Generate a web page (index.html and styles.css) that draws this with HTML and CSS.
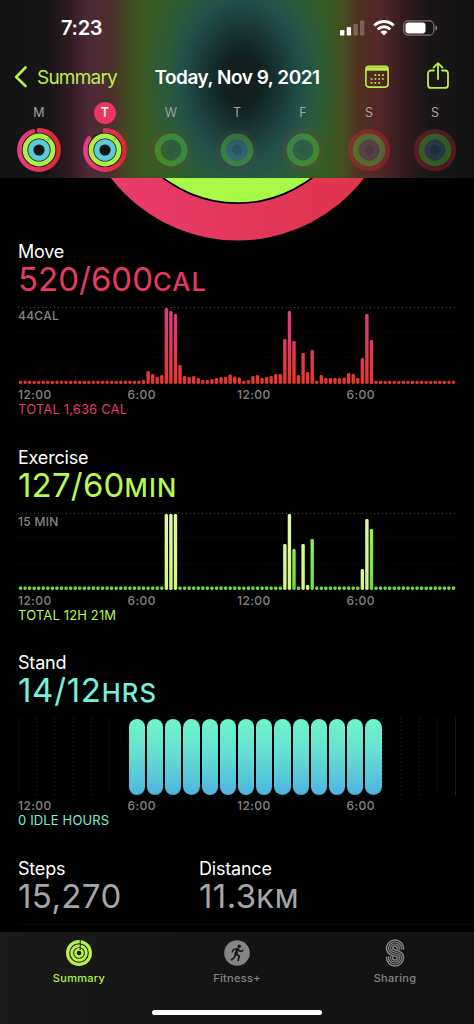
FILE: index.html
```html
<!DOCTYPE html>
<html lang="en">
<head>
<meta charset="UTF-8">
<meta name="viewport" content="width=device-width, initial-scale=1.0">
<title>Activity Summary</title>
<link rel="stylesheet" href="styles.css">
</head>
<body>
  <header class="top">
    <div class="status">
      <div class="time">7:23</div>
      <div class="status-icons">
        <svg class="signal" width="25" height="16" viewBox="0 0 25 16" fill="#fff">
          <rect x="0" y="10" width="4.4" height="5.5" rx="1.2"/>
          <rect x="6.7" y="7" width="4.4" height="8.5" rx="1.2"/>
          <rect x="13.4" y="4" width="4.4" height="11.5" rx="1.2" opacity=".25"/>
          <rect x="20" y="0.5" width="4.4" height="15" rx="1.2" opacity=".25"/>
        </svg>
        <svg class="wifi" width="22" height="16" viewBox="0 0 22 16" fill="none" stroke="#fff" stroke-width="2.9">
          <path d="M1.3 5.6a13.7 13.7 0 0 1 19.4 0"/>
          <path d="M4.7 9.4a8.9 8.9 0 0 1 12.6 0"/>
          <path d="M7.4 12a5.1 5.1 0 0 1 7.2 0L11 15.6z" fill="#fff" stroke="none"/>
        </svg>
        <svg class="battery" width="35" height="16" viewBox="0 0 35 16">
          <rect x=".8" y=".8" width="30" height="14.4" rx="4.5" fill="none" stroke="#fff" stroke-opacity=".4" stroke-width="1.2"/>
          <rect x="2.5" y="2.6" width="20" height="10.8" rx="2.8" fill="#fff"/>
          <path d="M32.4 5.3c2.4.7 2.4 4.7 0 5.4z" fill="#fff" fill-opacity=".45"/>
        </svg>
      </div>
    </div>

    <nav class="nav">
      <div class="back">
        <svg width="14" height="22" viewBox="0 0 14 22" fill="none" stroke="#b8f048" stroke-width="2.6" stroke-linecap="round" stroke-linejoin="round"><path d="M11.500 1.500 2.200 11l9.300 9"/></svg>
        <span class="back-text">Summary</span>
      </div>
      <div class="title">Today, Nov 9, 2021</div>
      <div class="actions">
        <svg width="24" height="24" viewBox="0 0 24 24" fill="none" stroke="#b8f048" stroke-width="1.6">
          <rect x=".9" y="2.2" width="22.2" height="20.9" rx="3"/>
          <path d="M1.200 3.200h21.600v3.500H1.200z" fill="#b8f048" stroke="none"/>
          <path d="M9.500 11.100h10M5.700 15h13.500M5.700 18.900h9.500" stroke-width="1.7" stroke-dasharray="1.7 2.1"/>
        </svg>
        <svg width="22" height="28" viewBox="0 0 22 28" fill="none" stroke="#b8f048" stroke-width="1.8" stroke-linecap="round" stroke-linejoin="round">
          <path d="M7 8.500H4a3 3 0 0 0-3 3v11.400a3 3 0 0 0 3 3h14a3 3 0 0 0 3-3V11.500a3 3 0 0 0-3-3h-3"/>
          <path d="M11 17V1.500M6.500 5.600 11 1.100l4.500 4.500"/>
        </svg>
      </div>
    </nav>

    <div class="week" id="week"></div>
  </header>

  <main>
    <svg class="hero" width="474" height="63" viewBox="0 0 474 63">
      <defs>
        <linearGradient id="heroMove" x1="0" x2="1"><stop offset="0" stop-color="#e93c70"/><stop offset="1" stop-color="#df3349"/></linearGradient>
      </defs>
      <circle cx="237.5" cy="-97" r="159.5" fill="url(#heroMove)"/>
      <circle cx="237.5" cy="-97" r="123" fill="#000"/>
      <circle cx="237.5" cy="-97" r="121.3" fill="#a8fa48"/>
    </svg>

    <section class="metric move">
      <h2>Move</h2>
      <div class="value">520/600<small>CAL</small></div>
      <div class="chart">
        <span class="max">44CAL</span>
        <svg id="moveChart" width="438" height="77">
          <defs>
            <linearGradient id="moveFill" gradientUnits="userSpaceOnUse" x1="0" y1="0" x2="0" y2="77"><stop offset="0" stop-color="#e03c88"/><stop offset="1" stop-color="#e6372a"/></linearGradient>
          </defs>
        </svg>
      </div>
      <div class="hours"><span>12:00</span><span>6:00</span><span>12:00</span><span>6:00</span></div>
      <div class="total">TOTAL 1,636 CAL</div>
    </section>

    <section class="metric exercise">
      <h2>Exercise</h2>
      <div class="value">127/60<small>MIN</small></div>
      <div class="chart">
        <span class="max">15 MIN</span>
        <svg id="exerciseChart" width="438" height="77">
          <defs>
            <linearGradient id="exerciseFill" gradientUnits="userSpaceOnUse" x1="0" y1="0" x2="0" y2="77"><stop offset="0" stop-color="#a8f050"/><stop offset="1" stop-color="#6fdc48"/></linearGradient>
            <linearGradient id="lightFill" gradientUnits="userSpaceOnUse" x1="0" y1="0" x2="0" y2="77"><stop offset="0" stop-color="#e2faa9"/><stop offset="1" stop-color="#d4f77f"/></linearGradient>
          </defs>
        </svg>
      </div>
      <div class="hours"><span>12:00</span><span>6:00</span><span>12:00</span><span>6:00</span></div>
      <div class="total">TOTAL 12H 21M</div>
    </section>

    <section class="metric stand">
      <h2>Stand</h2>
      <div class="value">14/12<small>HRS</small></div>
      <div class="stand-chart" id="standChart"></div>
      <div class="hours"><span>12:00</span><span>6:00</span><span>12:00</span><span>6:00</span></div>
      <div class="total">0 IDLE HOURS</div>
    </section>

    <section class="totals">
      <div class="steps">
        <h2>Steps</h2>
        <div class="value">15,270</div>
      </div>
      <div class="distance">
        <h2>Distance</h2>
        <div class="value">11.3<small>KM</small></div>
      </div>
    </section>
  </main>

  <footer class="tabs">
    <div class="tab active">
      <svg width="28" height="28" viewBox="0 0 28 28" fill="none" stroke="#b8f048">
        <circle cx="14" cy="14" r="11.4" stroke-width="3.2"/>
        <circle cx="14" cy="14" r="7.3" stroke-width="2.9"/>
        <circle cx="14" cy="14" r="3.6" stroke-width="2.6"/>
        <path d="M15.200 1v10" stroke="#161616" stroke-width="1"/>
      </svg>
      <span>Summary</span>
    </div>
    <div class="tab">
      <svg width="28" height="28" viewBox="0 0 28 28" fill="none" stroke="#161616" stroke-linecap="round" stroke-linejoin="round">
        <circle cx="14" cy="14" r="12.8" fill="#858585" stroke="none"/>
        <circle cx="16.2" cy="7.2" r="1.7" fill="#161616" stroke="none"/>
        <path d="M14.600 10.300 12.800 15" stroke-width="3"/>
        <path d="M14.500 9.800 10.600 10.400 9.200 13M15.500 10.200l1.700 2.300 2.800-1" stroke-width="1.4"/>
        <path d="M13.300 15l3 2.200-1.200 4.200M12.400 15.400l-1 3-2.800 2.400" stroke-width="1.7"/>
      </svg>
      <span>Fitness+</span>
    </div>
    <div class="tab">
      <svg width="28" height="28" viewBox="0 0 28 28" fill="none">
        <defs>
          <path id="sharingS" d="M19.500 10.500V9.500a5.500 5.500 0 0 0-11 0c0 3.200 2.600 3.900 5.500 4.500s5.500 1.500 5.500 4.500a5.500 5.500 0 0 1-11 0v-1"/>
        </defs>
        <use href="#sharingS" stroke="#858585" stroke-width="7.600"/>
        <use href="#sharingS" stroke="#161616" stroke-width="4.600"/>
        <use href="#sharingS" stroke="#858585" stroke-width="3.200"/>
        <use href="#sharingS" stroke="#161616" stroke-width=".9"/>
      </svg>
      <span>Sharing</span>
    </div>
    <div class="home-bar"></div>
  </footer>

  <script src="script.js"></script>
</body>
</html>
```
FILE: styles.css
```css
* {
  box-sizing: border-box;
}

body {
  margin: 0;
  width: 474px;
  height: 1024px;
  display: flex;
  flex-direction: column;
  overflow: hidden;
  background: #000;
  color: #fff;
  font-family: Inter, "Liberation Sans", sans-serif;
}

svg {
  display: block;
  flex: none;
}

h2 {
  margin: 0;
  font-size: 18px;
  line-height: 22px;
  font-weight: 400;
  letter-spacing: -0.2px;
}

/* Header */
.top {
  flex: none;
  height: 178px;
  background:
    radial-gradient(ellipse 100px 135px at 242px 80px, #131b1d 0%, #121f20 18%, #173634 38%, rgba(31, 78, 76, 0.95) 58%, rgba(34, 88, 74, 0.6) 76%, rgba(44, 94, 44, 0) 100%),
    linear-gradient(90deg, #141414 0, #161415 45px, #2c1a20 68px, #4e2838 88px, #4c2f2c 110px, #43491f 126px, #3b5a1e 145px, #2d5f2a 185px, #2d5f30 290px, #365c1f 325px, #44501f 343px, #503021 358px, #552628 378px, #341d1f 402px, #1a1617 428px, #131313 474px);
}

.status {
  height: 55px;
  display: flex;
  justify-content: space-between;
  padding: 0 36px 0 61px;
}

.time {
  margin-top: 16px;
  font-size: 20px;
  line-height: 25px;
  font-weight: 600;
  letter-spacing: -0.3px;
}

.status-icons {
  display: flex;
  align-items: center;
  height: 55px;
}

.wifi {
  margin-left: 8px;
}

.battery {
  margin-left: 8px;
}

.nav {
  height: 44px;
  display: grid;
  grid-template-columns: 137px 200px 137px;
  align-items: center;
}

.back {
  display: flex;
  align-items: center;
  padding-left: 14px;
  color: #b8f048;
  font-size: 19px;
}

.back-text {
  margin-left: 9px;
  letter-spacing: -0.8px;
}

.title {
  text-align: center;
  white-space: nowrap;
  font-size: 19px;
  font-weight: 600;
  letter-spacing: -0.48px;
}

.actions {
  display: flex;
  align-items: center;
  justify-content: space-between;
  padding: 0 25px 2px 28px;
}

.week {
  display: grid;
  grid-template-columns: repeat(7, 66px);
  padding-left: 6px;
}

.day {
  display: flex;
  flex-direction: column;
  align-items: center;
}

.letter {
  width: 22px;
  height: 22px;
  margin: 3px 0 4px;
  border-radius: 50%;
  line-height: 22px;
  text-align: center;
  font-size: 12.5px;
  color: #a0a0a0;
}

.day.today .letter {
  background: #ee3562;
  color: #fff;
  font-weight: 600;
}

.day.future svg {
  opacity: 0.38;
}

/* Metrics */
main {
  flex: 1;
  min-height: 0;
  overflow: hidden;
}

.metric {
  height: 205.7px;
  padding: 0 18px;
}

.value {
  height: 34px;
  line-height: 32px;
  font-size: 33px;
  white-space: nowrap;
}

.value small {
  font-size: 25.5px;
  font-weight: 500;
  letter-spacing: 1.1px;
}

.move .value,
.move .total {
  color: #e73a60;
}

.exercise .value,
.exercise .total {
  color: #b6f94f;
}

.stand .value,
.stand .total {
  color: #70f2dd;
}

.exercise .value {
  letter-spacing: 0.2px;
}

.stand .value {
  letter-spacing: 0.7px;
}

.chart {
  position: relative;
  height: 77px;
  margin-top: 10px;
  background:
    repeating-linear-gradient(90deg, #474747 0 1px, transparent 1px 4px) 0 0 / 100% 1px no-repeat,
    repeating-linear-gradient(90deg, #202020 0 1px, transparent 1px 4px) 0 25px / 100% 1px no-repeat,
    repeating-linear-gradient(90deg, #191919 0 1px, transparent 1px 4px) 0 50px / 100% 1px no-repeat;
}

.max {
  position: absolute;
  left: 0;
  top: 1px;
  font-size: 12px;
  line-height: 16px;
  font-weight: 500;
  letter-spacing: 0.3px;
  color: #858585;
}

.hours {
  display: grid;
  grid-template-columns: 109.5px 109.5px 109.5px 1fr;
  height: 18px;
  line-height: 21px;
  font-size: 12px;
  font-weight: 500;
  letter-spacing: 0.45px;
  color: #858585;
}

.total {
  line-height: 15px;
  font-size: 13px;
  letter-spacing: 0.15px;
}

.stand-chart {
  display: grid;
  grid-template-columns: repeat(24, 1fr);
  height: 77px;
  margin-top: 10px;
  border-right: 1px dotted #333;
}

.hour {
  background: repeating-linear-gradient(0deg, #2a2a2a 0 1px, transparent 1px 4px) 0 0 / 1px 100% no-repeat;
}

.hour.stood {
  margin: 1px 0.5px 0 1.5px;
  border-radius: 9px;
  background: linear-gradient(#6ef5ca, #66dfd2 45%, #4cb4de);
}

.totals {
  display: grid;
  grid-template-columns: 181px 1fr;
  height: 67px;
  margin-left: 18px;
  border-bottom: 1px solid #090909;
}

.totals .value {
  color: #a5a6ab;
  letter-spacing: 0.4px;
}

/* Tab bar */
.tabs {
  position: relative;
  flex: none;
  height: 92px;
  padding-top: 7px;
  display: grid;
  grid-template-columns: repeat(3, 158px);
  background: linear-gradient(90deg, #1a1a1a, #131313 60%);
}

.tab {
  display: flex;
  flex-direction: column;
  align-items: center;
  font-size: 11px;
  font-weight: 500;
  line-height: 16px;
  letter-spacing: 0.3px;
  color: #858585;
}

.tab.active {
  color: #b8f048;
}

.tab span {
  margin-top: 3px;
}

.home-bar {
  position: absolute;
  left: 152px;
  bottom: 9px;
  width: 170px;
  height: 5.5px;
  border-radius: 3px;
  background: #fff;
}
```
FILE: script.js
```js
// One value for each 15 minutes of the day, in pixels
const moveRuns = [
  [27, 3.2],
  4, 13, 10, 7, 9, 76, 73, 70, 19, 8, 7, 8, 6, 4, 4, 5, 6, 7, 7, 9.5,
  7.5, 6.5, 3.2, 4, 8, 9, 6, 7, 8, 10, 10, 45, 73, 43, 9, 31, 12, 34, 3.2,
  9, 6, 6, 6, 6, 6.5, 11, 10, 6, 26, 70, 44,
  [18, 3.2]
];
const exercise = { 32: 76, 33: 76, 34: 76, 58: 46, 59: 76, 60: 41, 62: 46, 63: 5, 64: 51, 75: 21, 76: 71, 77: 61 };
const lightBars = [32, 33, 34, 58, 59, 62, 63, 75, 76];

const step = 4.558;

function addBar(chart, index, height, fill) {
  const bar = document.createElementNS('http://www.w3.org/2000/svg', 'rect');
  bar.setAttribute('x', 0.8 + index * step);
  bar.setAttribute('y', 77 - height);
  bar.setAttribute('width', 3.4);
  bar.setAttribute('height', height);
  bar.setAttribute('rx', 1.4);
  bar.setAttribute('fill', 'url(#' + fill + ')');
  chart.appendChild(bar);
}

const moveChart = document.getElementById('moveChart');
let slot = 0;
moveRuns.forEach(function(item) {
  if (Array.isArray(item)) {
    for (let i = 0; i < item[0]; i++) addBar(moveChart, slot++, item[1], 'moveFill');
  } else {
    addBar(moveChart, slot++, item, 'moveFill');
  }
});

const exerciseChart = document.getElementById('exerciseChart');
for (let i = 0; i < 96; i++) {
  addBar(exerciseChart, i, exercise[i] || 3.5, lightBars.includes(i) ? 'lightFill' : 'exerciseFill');
}

const standChart = document.getElementById('standChart');
for (let i = 0; i < 24; i++) {
  const hour = document.createElement('div');
  hour.className = i >= 6 && i < 20 ? 'hour stood' : 'hour';
  standChart.appendChild(hour);
}

// Week strip
const days = [
  { letter: 'M', move: 97 },
  { letter: 'T', move: 87, today: true },
  { letter: 'W', red: .25, blue: .2 },
  { letter: 'T', red: .25, blue: .9 },
  { letter: 'F', red: .35, blue: .3 },
  { letter: 'S', red: .9, blue: .6 },
  { letter: 'S', red: .8, blue: .7 }
];

const week = document.getElementById('week');
days.forEach(function(day) {
  const future = !day.move;
  let rings;
  if (future) {
    rings = `
      <circle cx="22" cy="22" r="18.8" stroke="#d8283a" stroke-width="4.600" opacity="${day.red}"/>
      <circle cx="22" cy="22" r="13.4" stroke="#5fd03c" stroke-width="6"/>
      <circle cx="22" cy="22" r="7.6" stroke="#5590c8" stroke-width="5.8" opacity="${day.blue}"/>
      <circle cx="22" cy="22" r="4.7" fill="#3a6a90" opacity="${day.blue}"/>`;
  } else {
    rings = `
      <circle cx="22" cy="22" r="17.5" fill="#141414"/>
      <g transform="rotate(-90 22 22)" stroke-linecap="round">
        <circle cx="22" cy="22" r="19.6" stroke="url(#ringMove)" stroke-width="4.6" pathLength="100" stroke-dasharray="${day.move - 2} 100"/>
      </g>
      <circle cx="22" cy="22" r="14" stroke="#abf04a" stroke-width="4.8"/>
      <circle cx="22" cy="22" r="8.2" stroke="#5ccbd5" stroke-width="5.2"/>
      <path d="M30.500 12.300l2.200-2" stroke="#78b832" stroke-width="1.200"/>`;
  }
  week.insertAdjacentHTML('beforeend', `
    <div class="day ${day.today ? 'today' : ''} ${future ? 'future' : ''}">
      <div class="letter">${day.letter}</div>
      <svg width="44" height="44" viewBox="0 0 44 44" fill="none">
        <defs><linearGradient id="ringMove" x1="0" y1="0" x2="0" y2="1"><stop offset="0" stop-color="#ea3c82"/><stop offset="1" stop-color="#db2932"/></linearGradient></defs>
        ${rings}
      </svg>
    </div>`);
});
```
